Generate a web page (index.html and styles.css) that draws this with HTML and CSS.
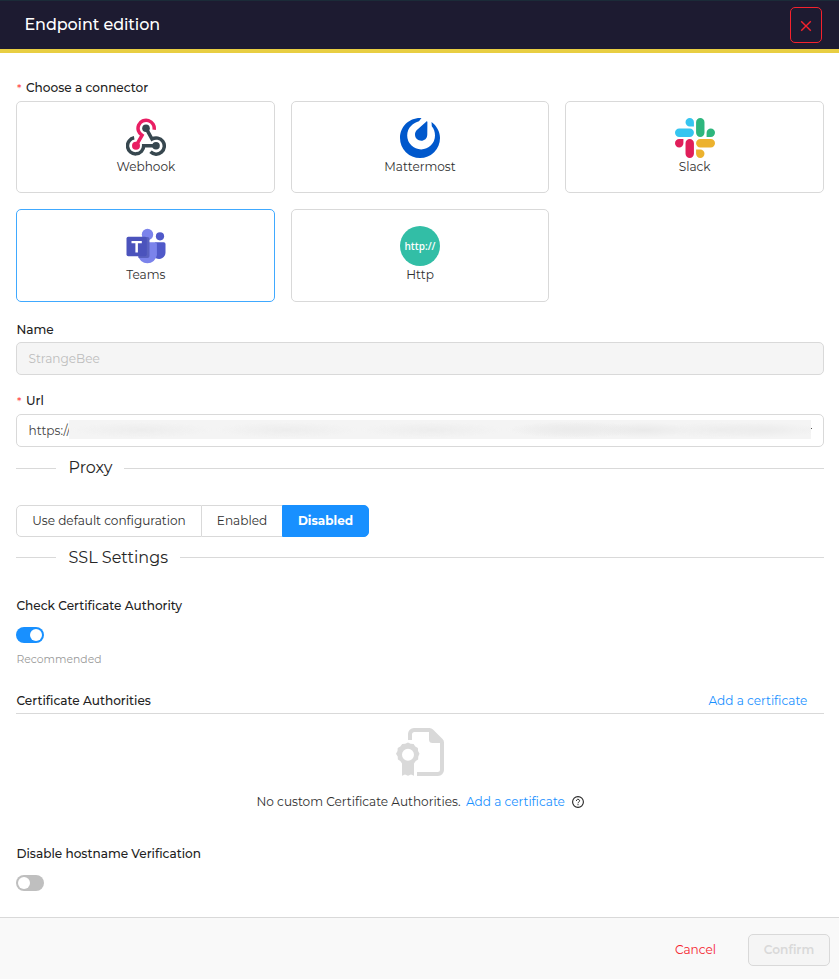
FILE: index.html
```html
<!DOCTYPE html>
<html lang="en">
<head>
<meta charset="utf-8">
<title>Endpoint edition</title>
<link rel="stylesheet" href="styles.css">
</head>
<body>
<div class="drawer">
  <header class="header">
    <h1 class="title">Endpoint edition</h1>
    <button class="close" aria-label="Close"><svg width="12" height="12" viewBox="0 0 12 12"><path d="M1.2 1.2 10.8 10.8M10.8 1.2 1.2 10.8" fill="none" stroke="#f5222d" stroke-width="1.4"/></svg></button>
  </header>
  <main class="content">
    <div class="label connector-label"><span class="star">*</span><span>Choose a connector</span></div>
    <div class="cards">
      <div class="card nudge">
        <svg width="40" height="40" viewBox="0 0 40 40" fill="none" stroke-width="3.5">
          <g stroke="#37474f">
            <path d="M8.2 19.8A8.1 8.1 0 1 0 17.7 27.8H30"/>
            <path d="M20 10.2 26 21.1A8.1 8.1 0 1 1 24.5 33.8"/>
          </g>
          <path d="M28.1 11.8A8.1 8.1 0 1 0 16 17.3L10 27.8" stroke="#e91e63"/>
          <circle cx="20" cy="10.2" r="3.8" fill="#37474f" stroke="none"/><circle cx="30" cy="27.8" r="3.8" fill="#37474f" stroke="none"/><circle cx="10" cy="27.8" r="4" fill="#e91e63" stroke="none"/>
        </svg>
        <span>Webhook</span>
      </div>
      <div class="card">
        <svg width="40" height="40" viewBox="0 0 40 40"><path fill="#0058cc" d="M21.5.1C9.5-.7 0 8.600 0 20a20 20 0 0 0 40 0c0-6.500-3.500-12.500-8.500-16l.3 4.200c2.200 2.700 3.200 5.800 3.200 9.300a13.900 13.900 0 0 1-27.800 0C7.200 9.500 13.500 4.500 19 3.200Z"/><path fill="#0058cc" d="M26.200 3.700c.5-.7 1.200-.4 1.200.4L27.300 16.200c0 9-12.300 8.200-12.300.3 0-1.700.6-3 1.600-4.200Z"/></svg>
        <span>Mattermost</span>
      </div>
      <div class="card">
        <svg width="40" height="40" viewBox="0 0 24 24">
          <path fill="#e01e5a" d="M5.042 15.165a2.528 2.528 0 0 1-2.52 2.523A2.528 2.528 0 0 1 0 15.165a2.527 2.527 0 0 1 2.522-2.52h2.520zM6.313 15.165a2.527 2.527 0 0 1 2.521-2.520 2.527 2.527 0 0 1 2.521 2.520v6.313A2.528 2.528 0 0 1 8.834 24a2.528 2.528 0 0 1-2.521-2.522z"/>
          <path fill="#36c5f0" d="M8.834 5.042a2.528 2.528 0 0 1-2.521-2.520A2.528 2.528 0 0 1 8.834 0a2.528 2.528 0 0 1 2.521 2.522v2.520zM8.834 6.313a2.528 2.528 0 0 1 2.521 2.521 2.528 2.528 0 0 1-2.521 2.521H2.522A2.528 2.528 0 0 1 0 8.834a2.528 2.528 0 0 1 2.522-2.521z"/>
          <path fill="#2eb67d" d="M18.956 8.834a2.528 2.528 0 0 1 2.522-2.521A2.528 2.528 0 0 1 24 8.834a2.528 2.528 0 0 1-2.522 2.521h-2.522zM17.688 8.834a2.528 2.528 0 0 1-2.523 2.521 2.527 2.527 0 0 1-2.520-2.521V2.522A2.527 2.527 0 0 1 15.165 0a2.528 2.528 0 0 1 2.523 2.522z"/>
          <path fill="#ecb22e" d="M15.165 18.956a2.528 2.528 0 0 1 2.523 2.522A2.528 2.528 0 0 1 15.165 24a2.527 2.527 0 0 1-2.520-2.522v-2.522zM15.165 17.688a2.527 2.527 0 0 1-2.520-2.523 2.526 2.526 0 0 1 2.520-2.520h6.313A2.527 2.527 0 0 1 24 15.165a2.528 2.528 0 0 1-2.522 2.523z"/>
        </svg>
        <span>Slack</span>
      </div>
      <div class="card selected nudge">
        <svg width="40" height="40" viewBox="0 0 40 40">
          <circle cx="34" cy="10.300" r="4.100" fill="#5059c9"/>
          <path fill="#5059c9" d="M29 16.300h8.800a1.700 1.700 0 0 1 1.700 1.700v8.500a6.500 6.500 0 0 1-9.500 5.700Z"/>
          <circle cx="21.500" cy="8.500" r="5.700" fill="#7b83eb"/>
          <path fill="#7b83eb" d="M12 16.300h17.200a1.700 1.700 0 0 1 1.700 1.700v11a9.600 9.600 0 0 1-19 0Z"/>
          <path fill="#5961c0" d="M12 11h9.500a2 2 0 0 1 2 2v17a2 2 0 0 1-2 2h-9Z"/>
          <rect x=".5" y="10.700" width="20.300" height="19.500" rx="1.800" fill="#4b53bc"/>
          <path fill="#fff" d="M5.500 15h10.300v2.200h-3.900v9.300H9.400v-9.300H5.500Z"/>
        </svg>
        <span>Teams</span>
      </div>
      <div class="card">
        <div class="http-logo">http://</div>
        <span>Http</span>
      </div>
    </div>
    <div class="label name-label"><span>Name</span></div>
    <div class="input disabled"><span>StrangeBee</span></div>
    <div class="label url-label"><span class="star">*</span><span>Url</span></div>
    <div class="input"><span class="scheme">https://</span><span class="redacted"></span><span class="speck"></span></div>
    <div class="divider proxy"><span>Proxy</span></div>
    <div class="segments">
      <div class="seg first">Use default configuration</div>
      <div class="seg second">Enabled</div>
      <div class="seg active">Disabled</div>
    </div>
    <div class="divider ssl"><span>SSL Settings</span></div>
    <div class="label check-label"><span>Check Certificate Authority</span></div>
    <div class="switch on"></div>
    <div class="hint">Recommended</div>
    <div class="ca-head"><span class="label">Certificate Authorities</span><a class="add">Add a certificate</a></div>
    <div class="empty">
      <svg width="48" height="48" viewBox="0 0 48 48" fill="#d9d9d9">
        <path d="M12 12V6a6 6 0 0 1 6-6h15.500a5 5 0 0 1 3.500 1.500l9.500 9.500a5 5 0 0 1 1.500 3.500V42a6 6 0 0 1-6 6H21v-4h20.500a2.500 2.500 0 0 0 2.500-2.500V15h-7.500a3.500 3.500 0 0 1-3.500-3.500V4H18.500A2.500 2.500 0 0 0 16 6.500V12Z"/>
        <path fill-rule="evenodd" d="M12 14.600l2.600 1.200 3 .2 1.700 2.400 2.600 1.600.2 3 1.400 2.700-1.200 2.700-.2 3-2.400 1.700-1.700 2.300V47.800l-3-1.300-3 1.300-3-1.300-3 1.300V35.400l-1.700-2.300-2.400-1.700-.2-3L0 25.700 1.500 23l.2-3 2.600-1.600L6.200 16l3-.2ZM12 20.800a6 6 0 1 0 0 12 6 6 0 0 0 0-12Z"/>
      </svg>
      <div class="empty-text"><span class="empty-note">No custom Certificate Authorities.</span><a class="add">Add a certificate</a><svg class="help" width="12" height="12" viewBox="0 0 12 12" fill="none" stroke="#262626"><circle cx="6" cy="6" r="5.400" stroke-width="1.100"/><path d="M4.400 4.900C4.400 2.700 7.600 2.800 7.600 4.800 7.600 6 6 6 6 7.300M6 8.100v1.100" stroke-width="1"/></svg></div>
    </div>
    <div class="label host-label"><span>Disable hostname Verification</span></div>
    <div class="switch"></div>
  </main>
  <footer class="footer"><span class="cancel">Cancel</span><button class="confirm">Confirm</button></footer>
</div>
</body>
</html>
```
FILE: styles.css
```css
* { box-sizing: border-box; }
body { margin: 0; font: 400 12.1px/20px Montserrat, Inter, sans-serif; color: #303030; background: #fff; }
.drawer { height: 979px; display: flex; flex-direction: column; }
.header { height: 53px; background: #1d1b31; border-top: 1px solid #1b2b38; border-bottom: 4px solid #e8ce42; display: flex; align-items: center; justify-content: space-between; padding: 0 17px 0 24.5px; flex: none; }
.title { margin: 0; font-size: 16px; font-weight: 500; line-height: 24px; color: #fff; letter-spacing: -.1px; white-space: nowrap; }
.close { width: 32px; height: 36px; margin-top: -1px; border: 1px solid #f5222d; border-radius: 5px; background: none; display: grid; place-items: center; padding: 2px 0 0; }
.content { flex: 1; padding: 25px 15px 0 16px; display: flex; flex-direction: column; }
.label { font-weight: 500; color: #222; height: 20px; display: flex; white-space: nowrap; }
.label > span:last-child { margin-left: .5px; }
.star { color: #ff4d4f; width: 9.5px; padding-left: 1px; font-size: 11px; }
.cards { display: grid; grid-template-columns: repeat(3, 1fr); grid-auto-rows: 92.25px; gap: 16px; margin-top: 3px; }
.card { border: 1px solid #d9d9d9; border-radius: 5px; display: flex; flex-direction: column; align-items: center; padding-top: 16px; line-height: 18px; white-space: nowrap; }
.card svg { flex: none; }
.card.nudge { padding-left: 1px; }
.card.selected { border-color: #40a9ff; }
.http-logo { width: 40px; height: 40px; flex: none; border-radius: 50%; background: #32bea6; color: #fff; font: 600 10px/40px "Open Sans", sans-serif; text-align: center; }
.name-label { margin-top: 18px; }
.input { height: 33px; margin-top: 2.5px; flex: none; border: 1px solid #d9d9d9; border-radius: 5px; display: flex; align-items: center; padding-left: 11.5px; color: #454545; }
.disabled { background: #f5f5f5; color: #bdbdbd; }
.url-label { margin-top: 16px; }
.scheme { width: 40.5px; padding-top: 1px; white-space: nowrap; }
.redacted { width: 742px; height: 19px; margin-top: -2px; background: radial-gradient(ellipse at center, #e9e9e9, transparent 70%) 530px 2px / 90px 16px no-repeat, radial-gradient(ellipse at center, #ebebeb, transparent 70%) 440px 1px / 130px 17px no-repeat, radial-gradient(ellipse at center, #ececec, transparent 70%) 640px 2px / 110px 16px no-repeat, radial-gradient(ellipse at center, #ededed, transparent 70%) 0 2px / 145px 16px repeat-x, #f4f4f4; }
.speck { width: 1px; height: 1px; background: #555; margin-top: -4px; }
.divider { display: flex; align-items: center; height: 24px; flex: none; font-size: 16px; font-weight: 400; color: #262626; white-space: nowrap; }
.divider::before, .divider::after { content: ""; height: 1px; background: #d9d9d9; margin-top: 1px; }
.divider::before { width: 40px; margin-right: 12.5px; }
.divider::after { flex: 1; margin-left: 12px; }
.proxy { margin-top: 9px; }
.segments { display: flex; margin-top: 25px; height: 32px; }
.seg { display: flex; align-items: center; justify-content: center; border: 1px solid #d9d9d9; white-space: nowrap; }
.first { width: 186px; border-radius: 5px 0 0 5px; }
.second { width: 80px; border-left: 0; border-right: 0; }
.active { width: 87px; background: #1890ff; border-color: #1890ff; color: #fff; font-size: 12px; font-weight: 700; border-radius: 0 5px 5px 0; }
.ssl { margin-top: 9px; }
.ssl::before, .ssl::after { margin-top: -1px; }
.check-label { margin-top: 26px; }
.switch { width: 28px; height: 16px; margin-top: 11px; flex: none; border-radius: 8px; background: #bfbfbf; padding: 2px; display: flex; }
.switch::after { content: ""; width: 12px; height: 12px; border-radius: 50%; background: #fff; }
.switch.on { background: #1890ff; justify-content: flex-end; }
.hint { margin-top: 7px; padding-left: .5px; color: #999; font-size: 10.8px; }
.ca-head { margin-top: 21px; height: 23px; display: flex; justify-content: space-between; border-bottom: 1px solid #d9d9d9; padding: 0 16px 0 .5px; white-space: nowrap; }
.add { color: #1890ff; width: 99.5px; }
.empty { padding-top: 14px; display: flex; flex-direction: column; align-items: center; }
.empty-text { display: flex; align-items: center; margin-top: 16px; white-space: nowrap; }
.empty-note { width: 209.5px; }
.help { margin-left: 6px; }
.host-label { margin-top: 32px; }
.footer { height: 62px; flex: none; background: #f9f9f9; border-top: 1px solid #d9d9d9; display: flex; justify-content: flex-end; align-items: center; padding: 2px 9px 0 0; }
.cancel { color: #f5222d; width: 41px; margin-right: 32px; }
.confirm { width: 82px; height: 32px; border: 1px solid #d9d9d9; border-radius: 5px; background: #f5f5f5; color: #d9d9d9; font: inherit; font-weight: 600; padding: 0; }
```
